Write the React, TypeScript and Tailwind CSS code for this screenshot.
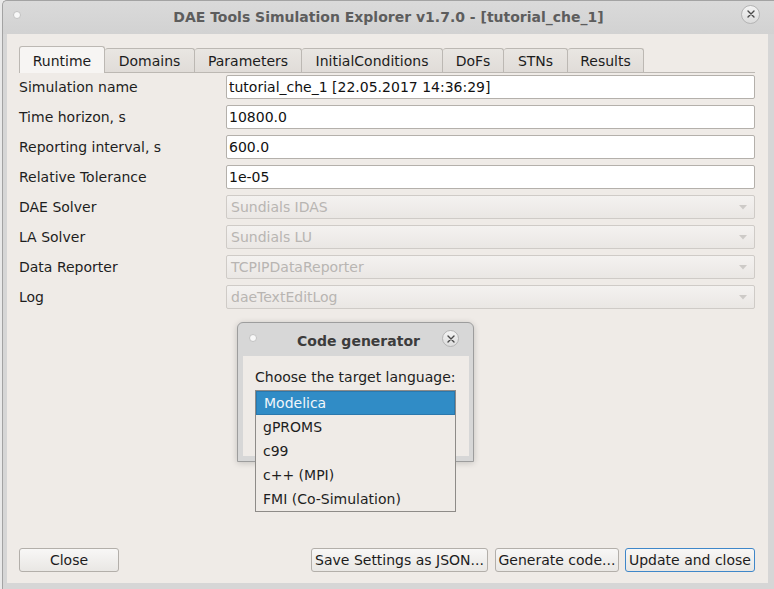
import React from "react";

const tabs = [
  { label: "Runtime", w: "w-[86px]", active: true },
  { label: "Domains", w: "w-[90px]", active: false },
  { label: "Parameters", w: "w-[107px]", active: false },
  { label: "InitialConditions", w: "w-[141px]", active: false },
  { label: "DoFs", w: "w-[61px]", active: false },
  { label: "STNs", w: "w-[64px]", active: false },
  { label: "Results", w: "w-[76px]", active: false },
];

const textRows = [
  { label: "Simulation name", value: "tutorial_che_1 [22.05.2017 14:36:29]" },
  { label: "Time horizon, s", value: "10800.0" },
  { label: "Reporting interval, s", value: "600.0" },
  { label: "Relative Tolerance", value: "1e-05" },
];

const comboRows = [
  { label: "DAE Solver", value: "Sundials IDAS" },
  { label: "LA Solver", value: "Sundials LU" },
  { label: "Data Reporter", value: "TCPIPDataReporter" },
  { label: "Log", value: "daeTextEditLog" },
];

const languages = ["Modelica", "gPROMS", "c99", "c++ (MPI)", "FMI (Co-Simulation)"];

function CloseCircle({ size }: { size: "big" | "small" }) {
  const cls = size === "big" ? "w-[19px] h-[19px]" : "w-[17px] h-[17px]";
  return (
    <div
      className={`${cls} rounded-full border border-[#b4b4b4] bg-gradient-to-b from-[#f4f4f4] to-[#dcdcdc] flex items-center justify-center`}
    >
      <svg width="8" height="8" viewBox="0 0 8 8">
        <path d="M1 1 L7 7 M7 1 L1 7" stroke="#4a4a4a" strokeWidth="1.4" strokeLinecap="round" />
      </svg>
    </div>
  );
}

function Dot() {
  return <div className="w-[8px] h-[8px] rounded-full bg-[#f8f8f8] border border-[#c2c2c2]" />;
}

function Button({ label, w, focused }: { label: string; w: string; focused?: boolean }) {
  return (
    <div
      className={`${w} h-[24px] rounded-[3px] border ${
        focused ? "border-[#3f87c9]" : "border-[#b3afaa]"
      } bg-gradient-to-b from-[#f8f7f6] to-[#e9e7e4] flex items-center justify-center text-[14px] text-[#1c1c1c] whitespace-nowrap`}
    >
      {label}
    </div>
  );
}

export default function App() {
  return (
    <div className="relative w-[774px] h-[589px] overflow-hidden flex bg-[#ececec] font-['DejaVu_Sans',sans-serif]">
      <div className="w-[2px] bg-[#e9e9e9]" />
      <div className="flex-1 flex flex-col bg-[#d6d6d6] border-l border-t border-[#a3a3a3] rounded-tl-[5px]">
        {/* Title bar */}
        <div className="h-[33px] flex items-center px-[10px] bg-gradient-to-b from-[#dadada] to-[#d2d2d2] rounded-tl-[5px]">
          <div className="w-[20px] flex justify-start mb-[5px]">
            <Dot />
          </div>
          <div className="flex-1 text-center text-[14px] font-bold text-[#5d5d5d] pl-[4px]">
            DAE Tools Simulation Explorer v1.7.0 - [tutorial_che_1]
          </div>
          <div className="w-[20px] flex justify-end mr-[4px] mb-[7px]">
            <CloseCircle size="big" />
          </div>
        </div>
        {/* Body */}
        <div className="flex-1 flex pl-[4px] pr-[6px] pb-[6px]">
          <div className="flex-1 flex flex-col bg-[#efebe7] pl-[12px] pr-[13px] pt-[12px] pb-[11px]">
            {/* Tabs */}
            <div className="flex items-end border-b border-[#bcb8b3]">
              {tabs.map((t) =>
                t.active ? (
                  <div
                    key={t.label}
                    className={`${t.w} h-[27px] -mb-px rounded-t-[3px] border border-b-0 border-[#bcb8b3] bg-[#f7f5f3] flex items-center justify-center text-[14px] text-[#1c1c1c] pt-[3px]`}
                  >
                    {t.label}
                  </div>
                ) : (
                  <div
                    key={t.label}
                    className={`${t.w} h-[24px] rounded-t-[3px] border border-b-0 border-l-0 border-[#bcb8b3] bg-gradient-to-b from-[#e9e6e2] to-[#e0dcd8] flex items-center justify-center text-[14px] text-[#1c1c1c] pt-[1px]`}
                  >
                    {t.label}
                  </div>
                )
              )}
            </div>
            {/* Form */}
            <div className="flex flex-col gap-[6px] mt-[2px]">
              {textRows.map((r) => (
                <div key={r.label} className="flex items-center h-[24px]">
                  <div className="w-[207px] text-[14px] text-[#1e1e1e]">{r.label}</div>
                  <div className="flex-1 h-[24px] rounded-[2px] border border-[#b4b0ab] bg-white flex items-center px-[2px] text-[14px] text-[#111]">
                    {r.value}
                  </div>
                </div>
              ))}
              {comboRows.map((r) => (
                <div key={r.label} className="flex items-center h-[24px]">
                  <div className="w-[207px] text-[14px] text-[#1e1e1e]">{r.label}</div>
                  <div className="flex-1 h-[24px] rounded-[2px] border border-[#cfcbc7] bg-gradient-to-b from-[#f4f2f0] to-[#eae7e4] flex items-center pl-[4px] pr-[7px] text-[14px] text-[#b8b5b2]">
                    <span className="flex-1">{r.value}</span>
                    <svg width="8" height="5" viewBox="0 0 8 5">
                      <path d="M0 0 L8 0 L4 4.5 Z" fill="#cdcac7" />
                    </svg>
                  </div>
                </div>
              ))}
            </div>
            <div className="flex-1" />
            {/* Buttons */}
            <div className="flex items-center">
              <Button label="Close" w="w-[100px]" />
              <div className="flex-1" />
              <Button label="Save Settings as JSON..." w="w-[177px]" />
              <div className="w-[7px]" />
              <Button label="Generate code..." w="w-[124px]" />
              <div className="w-[6px]" />
              <Button label="Update and close" w="w-[130px]" focused />
            </div>
          </div>
        </div>
      </div>

      {/* Code generator dialog */}
      <div className="absolute left-[237px] top-[322px] w-[237px] h-[140px] flex flex-col bg-[#d7d7d7] border border-[#9d9d9d] rounded-t-[6px] shadow-[0_1px_6px_rgba(0,0,0,0.18)]">
        <div className="h-[33px] flex items-center px-[11px]">
          <div className="mb-[4px]">
            <Dot />
          </div>
          <div className="flex-1 text-center text-[14px] font-bold text-[#3c3c3c] pl-[18px] pt-[3px]">Code generator</div>
          <div className="mr-[3px] mb-[2px]">
            <CloseCircle size="small" />
          </div>
        </div>
        <div className="flex-1 mx-[5px] mr-[4px] mb-[5px] bg-[#efebe7] px-[12px] pt-[11px]">
          <div className="text-[14px] text-[#1e1e1e] whitespace-nowrap">Choose the target language:</div>
        </div>
      </div>

      {/* Popup list */}
      <div className="absolute left-[255px] top-[390px] w-[201px] h-[122px] border border-[#8e8b88] bg-[#efebe7] flex flex-col">
        {languages.map((l, i) => (
          <div
            key={l}
            className={`h-[24px] flex items-center pl-[7px] text-[14px] ${
              i === 0 ? "bg-[#308cc6] text-[#f2f6fa] border border-[#2a78ad] pl-[6px]" : "text-[#1e1e1e]"
            }`}
          >
            {l}
          </div>
        ))}
      </div>
    </div>
  );
}
